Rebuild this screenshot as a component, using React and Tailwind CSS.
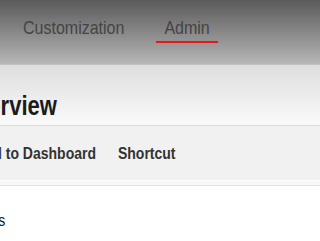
const font = { fontFamily: '"Liberation Sans", Arial, sans-serif' };

export default function App() {
  return (
    <div className="w-full h-[241px] overflow-hidden bg-white" style={font}>
      {/* Top nav */}
      <header className="h-[65px] bg-gradient-to-b from-[#5b5b5b] to-[#b7b7b7] border-b border-[#c2c2c2] flex items-start pl-[23px] pt-[20px] gap-[32px] leading-[16px]">
        <span className="text-[16px] leading-[16px] text-[#444] inline-block scale-y-[1.18]">Customization</span>
        <span className="px-[8px] pb-[5px] border-b-2 border-[#e8151b] leading-[16px]">
          <span className="text-[16px] leading-[16px] text-[#444] inline-block scale-y-[1.18]">Admin</span>
        </span>
      </header>

      {/* Page title */}
      <div className="h-[61px] bg-gradient-to-b from-[#dedede] to-[#fafafa] border-b border-[#dcdcdc] pt-[28px] whitespace-nowrap">
        <h1 className="ml-[-41px] text-[22px] leading-[22px] font-bold text-[#1b1b1b] inline-block scale-y-[1.23] origin-top">Overview</h1>
      </div>

      {/* Toolbar */}
      <div className="h-[55px] bg-[#f1f1f1] border-b border-white flex items-center gap-[22px] whitespace-nowrap">
        <span className="ml-[-35.5px] text-[14px] leading-[14px] font-bold text-[#333] inline-block scale-y-[1.2]">Panel to Dashboard</span>
        <span className="text-[14px] leading-[14px] font-bold text-[#333] inline-block scale-y-[1.2]">Shortcut</span>
      </div>
      <div className="h-[5px] bg-[#f8f8f8] border-b border-[#e2e2e2]" />

      {/* List */}
      <div className="pt-[22px] whitespace-nowrap">
        <span className="ml-[-29px] text-[14px] leading-[14px] text-[#222] inline-block scale-y-[1.2]">Items</span>
      </div>
    </div>
  );
}
